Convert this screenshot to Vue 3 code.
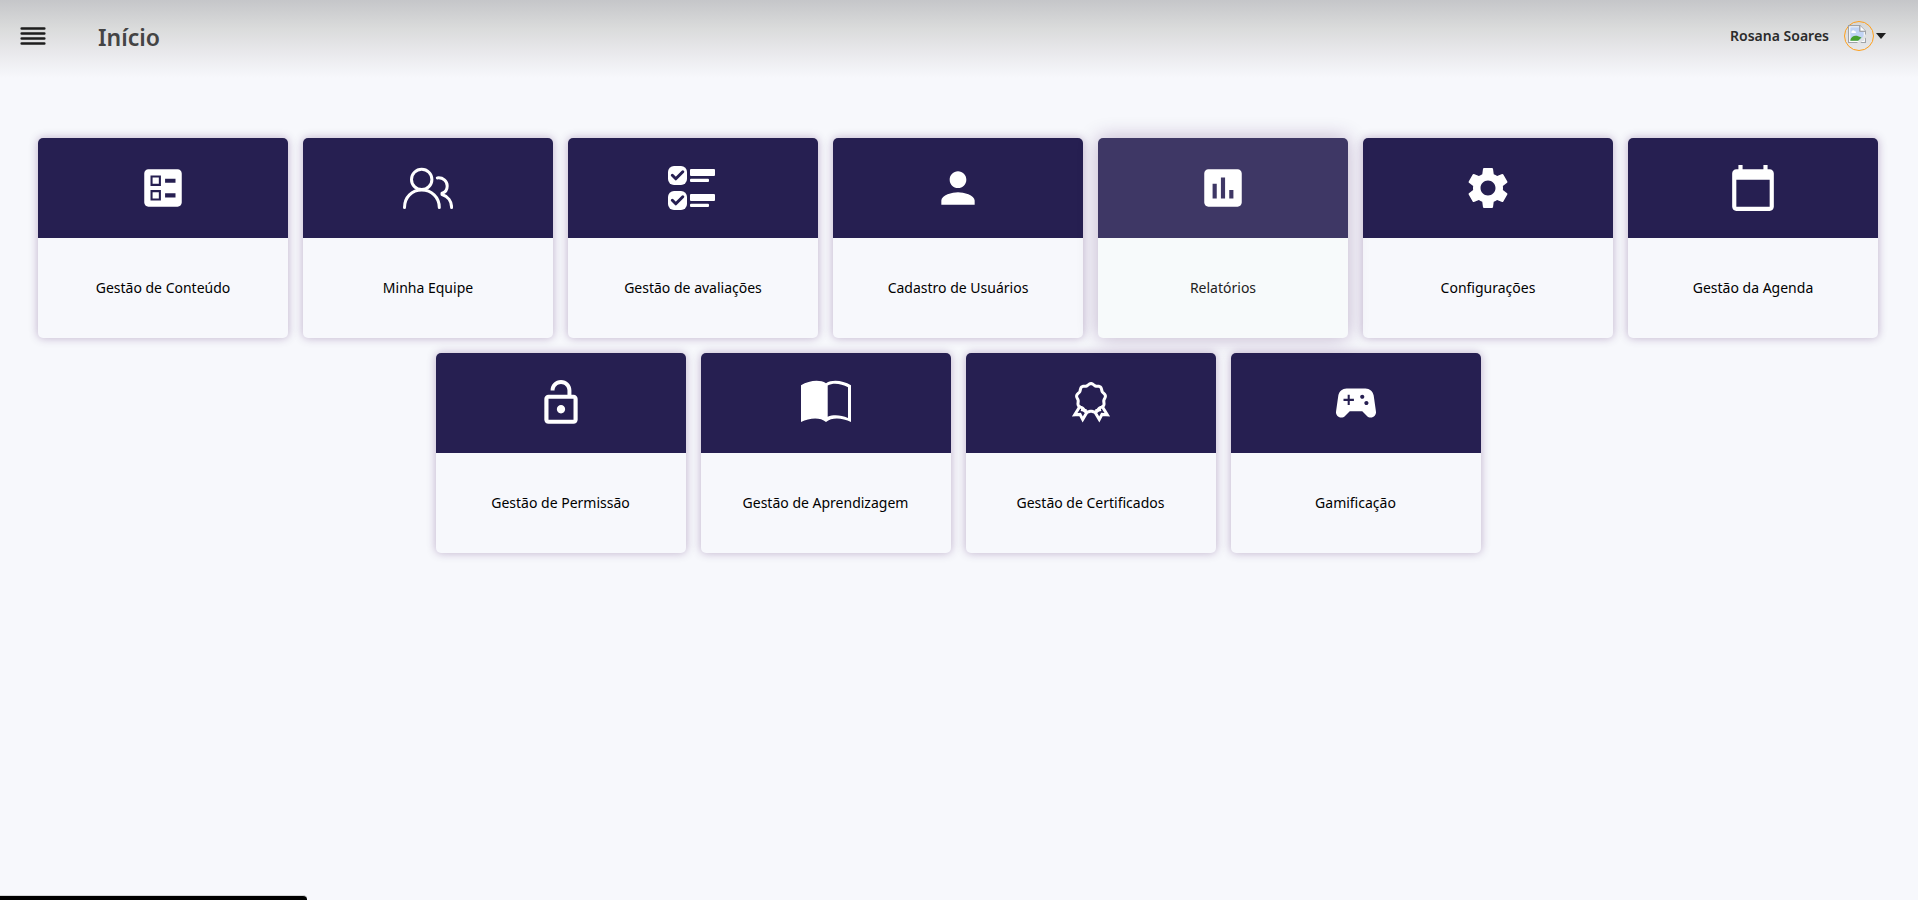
<script setup>
const cards = [
  { label: 'Gestão de Conteúdo', icon: 'ballot' },
  { label: 'Minha Equipe', icon: 'team' },
  { label: 'Gestão de avaliações', icon: 'checklist' },
  { label: 'Cadastro de Usuários', icon: 'person' },
  { label: 'Relatórios', icon: 'chart', active: true },
  { label: 'Configurações', icon: 'gear' },
  { label: 'Gestão da Agenda', icon: 'calendar' },
  { label: 'Gestão de Permissão', icon: 'lock' },
  { label: 'Gestão de Aprendizagem', icon: 'book' },
  { label: 'Gestão de Certificados', icon: 'award' },
  { label: 'Gamificação', icon: 'gamepad' }
]

const solid = {
  ballot: 'M13 9.5h5v-2h-5v2zm0 7h5v-2h-5v2zm6 4.5H5c-1.1 0-2-.9-2-2V5c0-1.1.9-2 2-2h14c1.1 0 2 .9 2 2v14c0 1.1-.9 2-2 2zM6 11h5V6H6v5zm1-4h3v3H7V7zM6 18h5v-5H6v5zm1-4h3v3H7v-3z',
  person: 'M12 12c2.21 0 4-1.79 4-4s-1.79-4-4-4-4 1.79-4 4 1.79 4 4 4zm0 2c-2.67 0-8 1.34-8 4v2h16v-2c0-2.66-5.33-4-8-4z',
  chart: 'M19 3H5c-1.1 0-2 .9-2 2v14c0 1.1.9 2 2 2h14c1.1 0 2-.9 2-2V5c0-1.1-.9-2-2-2zM9 17H7v-7h2v7zm4 0h-2V7h2v10zm4 0h-2v-4h2v4z',
  gear: 'M19.14 12.94c.04-.3.06-.61.06-.94 0-.32-.02-.64-.07-.94l2.03-1.58c.18-.14.23-.41.12-.61l-1.92-3.32c-.12-.22-.37-.29-.59-.22l-2.39.96c-.5-.38-1.03-.7-1.62-.94L14.4 2.81c-.04-.24-.24-.41-.48-.41h-3.84c-.24 0-.43.17-.47.41L9.25 5.35c-.59.24-1.13.57-1.62.94l-2.39-.96c-.22-.08-.47 0-.59.22L2.74 8.87c-.12.21-.08.47.12.61l2.03 1.58c-.05.3-.09.63-.09.94s.02.64.07.94l-2.03 1.58c-.18.14-.23.41-.12.61l1.92 3.32c.12.22.37.29.59.22l2.39-.96c.5.38 1.03.7 1.62.94l.36 2.54c.05.24.24.41.48.41h3.84c.24 0 .44-.17.47-.41l.36-2.54c.59-.24 1.13-.56 1.62-.94l2.39.96c.22.08.47 0 .59-.22l1.92-3.32c.12-.22.07-.47-.12-.61l-2.01-1.58zM12 15.6c-1.98 0-3.6-1.62-3.6-3.6s1.62-3.6 3.6-3.6 3.6 1.62 3.6 3.6-1.62 3.6-3.6 3.6z',
  calendar: 'M20 3h-1V1h-2v2H7V1H5v2H4c-1.1 0-2 .9-2 2v16c0 1.1.9 2 2 2h16c1.1 0 2-.9 2-2V5c0-1.1-.9-2-2-2zm0 18H4V8h16v13z',
  lock: 'M12 17c1.1 0 2-.9 2-2s-.9-2-2-2-2 .9-2 2 .9 2 2 2zm6-9h-1V6c0-2.76-2.24-5-5-5S7 3.24 7 6h1.9c0-1.71 1.39-3.1 3.1-3.1 1.71 0 3.1 1.39 3.1 3.1v2H6c-1.1 0-2 .9-2 2v10c0 1.1.9 2 2 2h12c1.1 0 2-.9 2-2V10c0-1.1-.9-2-2-2zm0 12H6V10h12v10z',
  gamepad: 'M21.58 16.09l-1.09-7.66C20.21 6.46 18.52 5 16.53 5H7.47C5.48 5 3.79 6.46 3.51 8.43l-1.09 7.66C2.2 17.63 3.39 19 4.94 19c.68 0 1.32-.27 1.8-.75L9 16h6l2.25 2.25c.48.48 1.13.75 1.8.75 1.56 0 2.75-1.37 2.53-2.91zM11 11H9v2H8v-2H6v-1h2V8h1v2h2v1zm4-1c-.55 0-1-.45-1-1s.45-1 1-1 1 .45 1 1-.45 1-1 1zm2 3c-.55 0-1-.45-1-1s.45-1 1-1 1 .45 1 1-.45 1-1 1z'
}

// Scalloped edge of the award rosette.
function rosette(lobes) {
  let d = ''
  for (let i = 0; i <= lobes * 12; i++) {
    const a = (i / (lobes * 12)) * Math.PI * 2
    const r = 13.8 + 0.8 * Math.cos(a * lobes)
    d += `${i ? 'L' : 'M'}${(25 + r * Math.sin(a)).toFixed(2)} ${(20.2 - r * Math.cos(a)).toFixed(2)}`
  }
  return d + 'z'
}
const rosettePath = rosette(9)
</script>

<template>
  <div class="page">
    <header class="topbar">
      <button class="menu" type="button" aria-label="Menu">
        <svg width="26" height="20" viewBox="0 0 26 20" aria-hidden="true">
          <path d="M1.7 2.5h22.6M1.7 7.5h22.6M1.7 12.5h22.6M1.7 17.5h22.6" />
        </svg>
      </button>
      <h1>Início</h1>
      <button class="user" type="button">
        <span class="name">Rosana Soares</span>
        <span class="avatar">
          <svg width="18" height="18" viewBox="0 0 16 16" aria-hidden="true">
            <path d="M.5.5h10l5 5v10H.5z" fill="#fff" stroke="#a0a3a8" />
            <path d="M2 2h8v4h4v8H2z" fill="#c1d4f4" />
            <path d="M3 6.500c0-2 2.500-2.500 3-1 1.500 0 1.500 1.500.5 1.500H3z" fill="#fff" />
            <path d="M2 14c.5-4 4-5 7-4l3 1-3 3z" fill="#46a02e" />
            <path d="M8 16l8-8v3l-5 5z" fill="#e2e3e4" />
            <path d="M10.500.5v5h5" fill="#fff" stroke="#868b92" />
          </svg>
        </span>
        <svg class="caret" width="10" height="6" viewBox="0 0 10 6" aria-hidden="true">
          <path d="M0 0h10L5 6z" />
        </svg>
      </button>
    </header>

    <main class="cards">
      <a v-for="card in cards" :key="card.label" href="#" class="card" :class="{ active: card.active }">
        <span class="top">
          <svg v-if="solid[card.icon]" class="icon" viewBox="0 0 24 24" aria-hidden="true">
            <path :d="solid[card.icon]" fill-rule="evenodd" />
          </svg>
          <svg v-else-if="card.icon === 'team'" class="icon line" viewBox="0 0 50 50" aria-hidden="true">
            <circle cx="18.700" cy="16.400" r="10.200" />
            <path d="M1.500 44.500C1.500 34 9 27 18.700 27s17.600 7 17.600 17.500M34.300 14.900c5.700-.6 9.900 3 9.900 8 0 3.700-2 6.400-5.200 7.300v1.300c6 1.700 9.600 7 9.600 13" />
          </svg>
          <svg v-else-if="card.icon === 'checklist'" class="icon" viewBox="0 0 50 50" aria-hidden="true">
            <g v-for="y in [3, 28]" :key="y" :transform="`translate(0 ${y})`">
              <rect width="19" height="19" rx="6" />
              <path class="tick" d="M4.300 9.300l3.500 3.500 7-7" />
              <rect x="22" y="3" width="25" height="7" rx="1" />
              <rect x="22" y="12.700" width="19" height="3.300" rx="1" />
            </g>
          </svg>
          <svg v-else-if="card.icon === 'book'" class="icon" viewBox="0 0 50 50" aria-hidden="true">
            <path fill-rule="evenodd" d="M0 7.200C8 2.500 18.500 1 25 5.200 31.500 1 42 2.500 50 7.200V44c-8.500-4.300-19-5.300-25 0-6-5.300-16.500-4.300-25 0zM26.700 7.500v31.300c6-2.500 13.500-1.700 20.300 1.200V9.300c-6.500-3.300-14.300-5-20.300-1.800z" />
          </svg>
          <svg v-else class="icon line award" viewBox="0 0 50 50" aria-hidden="true">
            <path :d="rosettePath" />
            <path d="M13.500 29L8.700 36.800l5.300-.4 2.700 5 5-8.500M15 31.500l5.500 1.200M36.500 29l4.800 7.800-5.300-.4-2.700 5-5-8.500M35 31.500l-5.500 1.200" />
          </svg>
        </span>
        <span class="label">{{ card.label }}</span>
      </a>
    </main>

    <div class="status" aria-hidden="true"></div>
  </div>
</template>

<style>
body {
  background: #f7f8fc;
}
</style>

<style scoped>
.page {
  min-height: 100vh;
  font-family: "Noto Sans", "Open Sans", sans-serif;
  background: #f7f8fc;
}

.topbar {
  display: flex;
  align-items: center;
  box-sizing: border-box;
  height: 78px;
  padding: 0 32px 6px 20px;
  background: linear-gradient(#c5c6c9, #dadbdb 36%, #e8e8eb 66%, #f7f8fc);
}

button {
  padding: 0;
  border: 0;
  background: none;
  font: inherit;
  cursor: pointer;
}

.menu {
  display: flex;
}

.menu path {
  stroke: #1d1d1d;
  stroke-width: 2.600;
  stroke-linecap: round;
}

h1 {
  margin: 0 auto 0 52px;
  padding-top: 2px;
  font-size: 23px;
  line-height: 32px;
  font-weight: 600;
  color: #444;
}

.user {
  display: flex;
  align-items: center;
}

.name {
  font-size: 14px;
  font-weight: 600;
  line-height: 20px;
  color: #2b2b2b;
}

.avatar {
  display: flex;
  box-sizing: border-box;
  width: 30px;
  height: 30px;
  margin: 0 2px 0 15px;
  padding: 3px;
  border: 1px solid #ff9f1a;
  border-radius: 50%;
}

.caret {
  fill: #1d1d1d;
}

.cards {
  display: flex;
  flex-wrap: wrap;
  justify-content: center;
  gap: 15px;
  padding: 60px 16px 60px 14px;
}

.card {
  width: 250px;
  border-radius: 5px;
  background: #f7f8fc;
  color: #000;
  text-decoration: none;
  box-shadow: 0 0 10px rgba(60, 10, 90, 0.3);
}

.top {
  display: flex;
  align-items: center;
  justify-content: center;
  height: 100px;
  border-radius: 5px 5px 0 0;
  background: #261f51;
}

.icon {
  width: 50px;
  height: 50px;
  fill: #fff;
}

.icon.line {
  fill: none;
  stroke: #fff;
  stroke-width: 3;
  stroke-linecap: round;
  stroke-linejoin: round;
}

.icon.award {
  stroke-linecap: butt;
  stroke-linejoin: miter;
}

.tick {
  fill: none;
  stroke: #261f51;
  stroke-width: 3;
  stroke-linecap: round;
  stroke-linejoin: round;
}

.label {
  display: flex;
  align-items: center;
  justify-content: center;
  height: 100px;
  font-size: 14px;
  line-height: 20px;
}

.active {
  position: relative;
  background: #f7fafb;
  color: #222;
  box-shadow: 0 0 20px rgba(60, 10, 90, 0.3);
}

.active .top {
  background: #3e3765;
}

.status {
  position: fixed;
  left: 0;
  bottom: 0;
  width: 307px;
  height: 4px;
  border-top: 1px solid #d5d6d8;
  border-radius: 0 4px 0 0;
  background: #000;
}
</style>
